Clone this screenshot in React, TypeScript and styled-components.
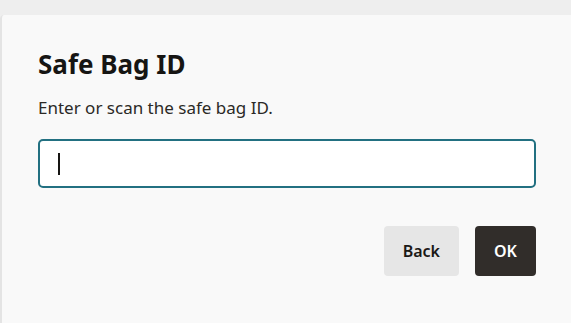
import styled, { createGlobalStyle } from "styled-components";

const Global = createGlobalStyle`
  html, body {
    margin: 0;
    padding: 0;
    background: #efefef;
  }
  * {
    box-sizing: border-box;
  }
`;

const Page = styled.div`
  width: 571px;
  height: 323px;
  display: flex;
  flex-direction: column;
  font-family: "Noto Sans", "Open Sans", sans-serif;
  color: #1a1816;
`;

const Strip = styled.div`
  height: 15px;
  background: #eeeeee;
  flex-shrink: 0;
`;

const Dialog = styled.div`
  flex: 1;
  background: #f9f9f9;
  border-left: 2px solid #e4e4e4;
  border-top-left-radius: 4px;
  padding: 33px 35px 0 36px;
  display: flex;
  flex-direction: column;
`;

const Title = styled.h1`
  margin: 0;
  font-size: 26px;
  line-height: 32px;
  font-weight: 700;
  color: #161513;
`;

const Hint = styled.p`
  margin: 17px 0 0;
  font-size: 17px;
  line-height: 22px;
  color: #2b2926;
`;

const Field = styled.div`
  margin-top: 20px;
  height: 49px;
  background: #ffffff;
  border: 2px solid #227081;
  border-radius: 5px;
  display: flex;
  align-items: center;
  padding-left: 18px;
`;

const Caret = styled.span`
  width: 1.5px;
  height: 22px;
  background: #161513;
`;

const Actions = styled.div`
  margin-top: 38px;
  display: flex;
  justify-content: flex-end;
  gap: 16px;
`;

const Button = styled.button<{ $primary?: boolean }>`
  height: 50px;
  padding: 0 ${(p) => (p.$primary ? "17px" : "19px")};
  min-width: ${(p) => (p.$primary ? "61px" : "72px")};
  border: none;
  border-radius: 4px;
  font-family: "Noto Sans", "Open Sans", sans-serif;
  font-size: 16px;
  font-weight: 600;
  background: ${(p) => (p.$primary ? "#312d2a" : "#e6e6e6")};
  color: ${(p) => (p.$primary ? "#ffffff" : "#1a1816")};
  cursor: pointer;
`;

export default function App() {
  return (
    <>
      <Global />
      <Page>
        <Strip />
        <Dialog>
          <Title>Safe Bag ID</Title>
          <Hint>Enter or scan the safe bag ID.</Hint>
          <Field>
            <Caret />
          </Field>
          <Actions>
            <Button>Back</Button>
            <Button $primary>OK</Button>
          </Actions>
        </Dialog>
      </Page>
    </>
  );
}
